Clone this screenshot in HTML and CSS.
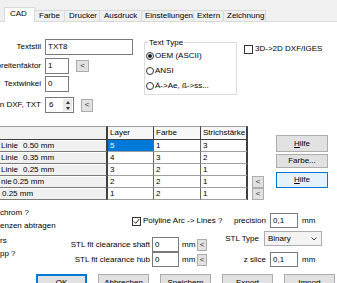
FILE: index.html
```html
<!DOCTYPE html>
<html lang="de">
<head>
<meta charset="utf-8">
<title>Einstellungen CAD</title>
<link rel="stylesheet" href="styles.css">
</head>
<body>
<div class="dialog">
  <div class="tabs">
    <div class="tab tab-active tab-cad">CAD</div>
    <div class="tab tab-farbe">Farbe</div>
    <div class="tab tab-drucker">Drucker</div>
    <div class="tab tab-ausdruck">Ausdruck</div>
    <div class="tab tab-einst">Einstellungen</div>
    <div class="tab tab-extern">Extern</div>
    <div class="tab tab-zeich">Zeichnung</div>
  </div>

  <div class="page">
    <div class="top">
      <div class="fields">
        <div class="frow">
          <div class="flabel"><span>Textstil</span></div>
          <div class="input input-wide">TXT8</div>
        </div>
        <div class="frow frow-2">
          <div class="flabel"><span>breitenfaktor</span></div>
          <div class="input input-narrow">1</div>
          <div class="btn btn-small">&lt;</div>
        </div>
        <div class="frow frow-3">
          <div class="flabel"><span>Textwinkel</span></div>
          <div class="input input-narrow">0</div>
        </div>
        <div class="frow frow-4">
          <div class="flabel"><span>n DXF, TXT</span></div>
          <div class="input input-spin">6
            <div class="spin">
              <div class="spin-btn"><span class="tri-up"></span></div>
              <div class="spin-btn"><span class="tri-down"></span></div>
            </div>
          </div>
          <div class="btn btn-small btn-small-2">&lt;</div>
        </div>
      </div>

      <fieldset class="group">
        <legend>Text Type</legend>
        <div class="radio-row"><span class="radio"><span class="dot"></span></span>OEM (ASCII)</div>
        <div class="radio-row"><span class="radio"></span>ANSI</div>
        <div class="radio-row"><span class="radio"></span>Ä-&gt;Ae, ß-&gt;ss...</div>
      </fieldset>

      <div class="check-row check-3d"><span class="checkbox"></span>3D-&gt;2D DXF/IGES</div>
    </div>

    <div class="mid">
      <div class="grid">
        <div class="gh gh-corner"></div>
        <div class="gh">Layer</div>
        <div class="gh">Farbe</div>
        <div class="gh gh-last">Strichstärke</div>

        <div class="rh"><span class="rh-name">Linie</span>0.50 mm</div>
        <div class="gc sel">5</div>
        <div class="gc">1</div>
        <div class="gc gc-last">3</div>

        <div class="rh"><span class="rh-name">Linie</span>0.35 mm</div>
        <div class="gc">4</div>
        <div class="gc">3</div>
        <div class="gc gc-last">2</div>

        <div class="rh"><span class="rh-name">Linie</span>0.25 mm</div>
        <div class="gc">3</div>
        <div class="gc">2</div>
        <div class="gc gc-last">1</div>

        <div class="rh"><span class="rh-name rh-name-short">nie</span>0.25 mm</div>
        <div class="gc">2</div>
        <div class="gc">2</div>
        <div class="gc gc-last">1</div>

        <div class="rh rh-plain">0.25 mm</div>
        <div class="gc">1</div>
        <div class="gc">2</div>
        <div class="gc gc-last">1</div>
      </div>

      <div class="arrows">
        <div class="btn btn-arrow">&lt;</div>
        <div class="btn btn-arrow">&lt;</div>
      </div>

      <div class="side">
        <div class="btn side-hilfe"><span><u>H</u>ilfe</span></div>
        <div class="btn side-farbe">Farbe...</div>
        <div class="btn btn-focus side-hilfe2"><span><u>H</u>ilfe</span></div>
      </div>
    </div>

    <div class="low">
      <div class="col-a">
        <div class="la la-1">chrom ?</div>
        <div class="la">enzen abtragen</div>
        <div class="la la-3">rs</div>
        <div class="la">pp ?</div>
      </div>

      <div class="col-b">
        <div class="check-row poly">
          <span class="checkbox"><svg class="tick" viewBox="0 0 7 7" width="7" height="7"><polyline points="0.8,3.4 2.7,5.3 6.2,1.2" fill="none" stroke="#222" stroke-width="1"/></svg></span>Polyline Arc -&gt; Lines ?
        </div>
        <div class="srow srow-shaft">
          <div class="slabel"><span>STL fit clearance shaft</span></div>
          <div class="input sinput">0</div>
          <div class="unit">mm</div>
          <div class="btn btn-tiny">&lt;</div>
        </div>
        <div class="srow">
          <div class="slabel"><span>STL fit clearance hub</span></div>
          <div class="input sinput">0</div>
          <div class="unit">mm</div>
          <div class="btn btn-tiny">&lt;</div>
        </div>
      </div>

      <div class="col-c">
        <div class="crow crow-prec">
          <div class="clabel"><span>precision</span></div>
          <div class="input cinput">0,1</div>
          <div class="cunit">mm</div>
        </div>
        <div class="crow crow-type">
          <div class="clabel clabel-type"><span>STL Type</span></div>
          <div class="select">Binary
            <svg class="chev" viewBox="0 0 6 4" width="6" height="4"><polyline points="0.5,0.5 3,3 5.5,0.5" fill="none" stroke="#444" stroke-width="1"/></svg>
          </div>
        </div>
        <div class="crow crow-z">
          <div class="clabel"><span>z slice</span></div>
          <div class="input cinput">0,1</div>
          <div class="cunit">mm</div>
        </div>
      </div>
    </div>

    <div class="footer">
      <div class="btn fbtn fbtn-default">OK</div>
      <div class="btn fbtn">Abbrechen</div>
      <div class="btn fbtn">Speichern</div>
      <div class="btn fbtn">Export</div>
      <div class="btn fbtn">Import</div>
    </div>
  </div>
</div>
</body>
</html>
```

FILE: styles.css
```css
* { box-sizing: border-box; }
html, body { margin: 0; padding: 0; }
body {
  width: 337px;
  height: 283px;
  overflow: hidden;
  background: #f0f0f0;
  font-family: "Liberation Sans", Arial, sans-serif;
  font-size: 8px;
  line-height: 10px;
  color: #000;
}
.dialog { width: 337px; height: 283px; overflow: hidden; }

/* tabs */
.tabs {
  display: flex;
  align-items: flex-end;
  height: 21px;
  padding-left: 4px;
}
.tab {
  flex: none;
  height: 11px;
  border: 1px solid #d9d9d9;
  border-bottom: none;
  background: #f0f0f0;
  margin-left: -1px;
  padding-left: 4px;
  line-height: 10px;
  white-space: nowrap;
}
.tab-active {
  height: 15px;
  margin-left: 0;
  margin-bottom: -1px;
  background: #fff;
  padding: 1px 0 0 5px;
  position: relative;
  z-index: 1;
}
.tab-cad { width: 31px; }
.tab-farbe { width: 31px; }
.tab-drucker { width: 36px; }
.tab-ausdruck { width: 43px; }
.tab-einst { width: 53px; padding-left: 3px; }
.tab-extern { width: 31px; padding-left: 3px; }
.tab-zeich { width: 43px; padding-left: 3px; }

/* page */
.page {
  background: #fff;
  border-top: 1px solid #d9d9d9;
  height: 262px;
}

.top {
  display: flex;
  align-items: flex-start;
  height: 104px;
}
.fields { margin-top: 17px; width: 133px; flex: none; }
.frow { display: flex; align-items: center; height: 16px; }
.frow-2 { margin-top: 3px; }
.frow-3 { margin-top: 2px; }
.frow-4 { margin-top: 5px; }
.flabel, .slabel, .clabel {
  flex: none;
  display: flex;
  justify-content: flex-end;
  white-space: nowrap;
}
.flabel { width: 41px; }

.input {
  flex: none;
  display: flex;
  align-items: center;
  height: 16px;
  border: 1px solid #7a7a7a;
  background: #fff;
  padding-left: 2px;
  margin-left: 4px;
  white-space: nowrap;
}
.input-wide { width: 88px; }
.input-narrow { width: 24px; }
.input-spin { width: 29px; padding-left: 3px; }
.spin {
  margin-left: auto;
  margin-right: 1px;
  width: 9px;
  height: 12px;
  display: flex;
  flex-direction: column;
}
.spin-btn {
  flex: 1;
  display: flex;
  align-items: center;
  justify-content: center;
  background: #e8e8e8;
}
.tri-up, .tri-down {
  width: 0;
  height: 0;
  border-left: 2.5px solid transparent;
  border-right: 2.5px solid transparent;
}
.tri-up { border-bottom: 3px solid #333; }
.tri-down { border-top: 3px solid #333; }

.btn {
  flex: none;
  display: flex;
  align-items: center;
  justify-content: center;
  border: 1px solid #adadad;
  background: #e1e1e1;
  white-space: nowrap;
}
.btn-small { width: 13px; height: 12px; margin-left: 7px; color: #333; }
.btn-small-2 { width: 12px; height: 13px; }

/* group box */
.group {
  flex: none;
  margin: 16px 0 0 11px;
  width: 93px;
  height: 57px;
  min-width: 0;
  border: 1px solid #dcdcdc;
  padding: 1px 0 0 0;
}
.group legend {
  margin-left: 3px;
  padding: 0 1px;
  line-height: 9px;
  font-size: 8px;
}
.radio-row {
  display: flex;
  align-items: center;
  height: 15px;
  white-space: nowrap;
}
.radio {
  flex: none;
  display: flex;
  align-items: center;
  justify-content: center;
  width: 8px;
  height: 8px;
  margin: 0 1px;
  border: 1px solid #333;
  border-radius: 50%;
  background: #fff;
}
.dot { width: 4px; height: 4px; border-radius: 50%; background: #222; }

.check-row {
  display: flex;
  align-items: center;
  height: 10px;
  white-space: nowrap;
}
.checkbox {
  flex: none;
  display: flex;
  align-items: center;
  justify-content: center;
  width: 9px;
  height: 9px;
  margin-right: 2px;
  border: 1px solid #333;
  background: #fff;
}
.tick { display: block; }
.check-3d { margin: 22px 0 0 7px; flex: none; }

/* grid */
.mid { display: flex; height: 74px; }
.grid {
  flex: none;
  display: grid;
  grid-template-columns: 108px 46px 47px 47px;
  grid-template-rows: 14px repeat(5, 12px);
  width: 248px;
}
.gh, .rh, .gc {
  display: flex;
  align-items: center;
  white-space: nowrap;
  overflow: hidden;
}
.gh {
  background: #f7f7f7;
  border-top: 1px solid #a0a0a0;
  border-bottom: 1px solid #404040;
  border-right: 1px solid #404040;
  padding-left: 2px;
}
.gh-corner { background: #f0f0f0; border-right-width: 2px; }
.gh-last { border-right-width: 2px; }
.rh {
  background: #f0f0f0;
  border-bottom: 1px solid #7a7a7a;
  border-right: 2px solid #404040;
  box-shadow: inset 0 1px 0 #fff;
  padding-left: 1px;
}
.rh-plain { padding-left: 2px; }
.rh-name { display: inline-block; width: 22px; }
.rh-name-short { width: 12px; }
.gc {
  background: #fff;
  border-bottom: 1px solid #a0a0a0;
  border-right: 1px solid #696969;
  padding-left: 2px;
}
.gc-last { border-right: 2px solid #404040; }
.sel { background: #0078d7; color: #fff; }

.arrows {
  flex: none;
  margin-left: 4px;
  display: flex;
  flex-direction: column;
  justify-content: flex-end;
}
.btn-arrow { width: 12px; height: 12px; color: #333; }

.side {
  flex: none;
  margin-left: 12px;
  width: 52px;
  display: flex;
  flex-direction: column;
}
.side-hilfe { margin-top: 9px; height: 17px; }
.side-farbe { margin-top: 2px; height: 14px; }
.side-hilfe2 { margin-top: 4px; height: 16px; }
.btn-focus { background: #e5f1fb; border-color: #0078d7; }

/* lower block */
.low { display: flex; height: 70px; }
.col-a { flex: none; width: 60px; }
.la { height: 13px; line-height: 13px; white-space: nowrap; }
.la-1 { margin-top: 6px; }
.la-3 { margin-top: 2px; }

.col-b { flex: none; width: 147px; }
.poly { margin: 16px 0 0 72px; }
.srow { display: flex; align-items: center; height: 15px; }
.srow-shaft { margin-top: 11px; }
.slabel { width: 90px; }
.sinput { margin-left: 2px; width: 27px; height: 15px; }
.unit { flex: none; margin-left: 3px; width: 12px; }
.btn-tiny { margin-left: 3px; width: 10px; height: 12px; color: #333; }

.col-c { flex: none; margin-left: 19px; width: 96px; }
.crow { display: flex; align-items: center; height: 15px; }
.crow-prec { margin-top: 13px; }
.crow-type { margin-top: 3px; }
.crow-z { margin-top: 6px; }
.clabel { width: 40px; }
.clabel-type { width: 33px; }
.cinput { margin-left: 4px; width: 28px; height: 15px; }
.cunit { flex: none; margin-left: 4px; }
.select {
  flex: none;
  display: flex;
  align-items: center;
  margin-left: 5px;
  width: 58px;
  height: 15px;
  padding: 0 4px 0 3px;
  border: 1px solid #adadad;
  background: #f3f3f3;
}
.chev { margin-left: auto; display: block; }

/* footer buttons */
.footer {
  display: flex;
  gap: 11px;
  padding: 4px 0 0 36px;
}
.fbtn { width: 51px; height: 16px; padding-top: 1px; }
.fbtn-default { border-color: #0078d7; box-shadow: inset 0 0 0 1px #0078d7; }
```
